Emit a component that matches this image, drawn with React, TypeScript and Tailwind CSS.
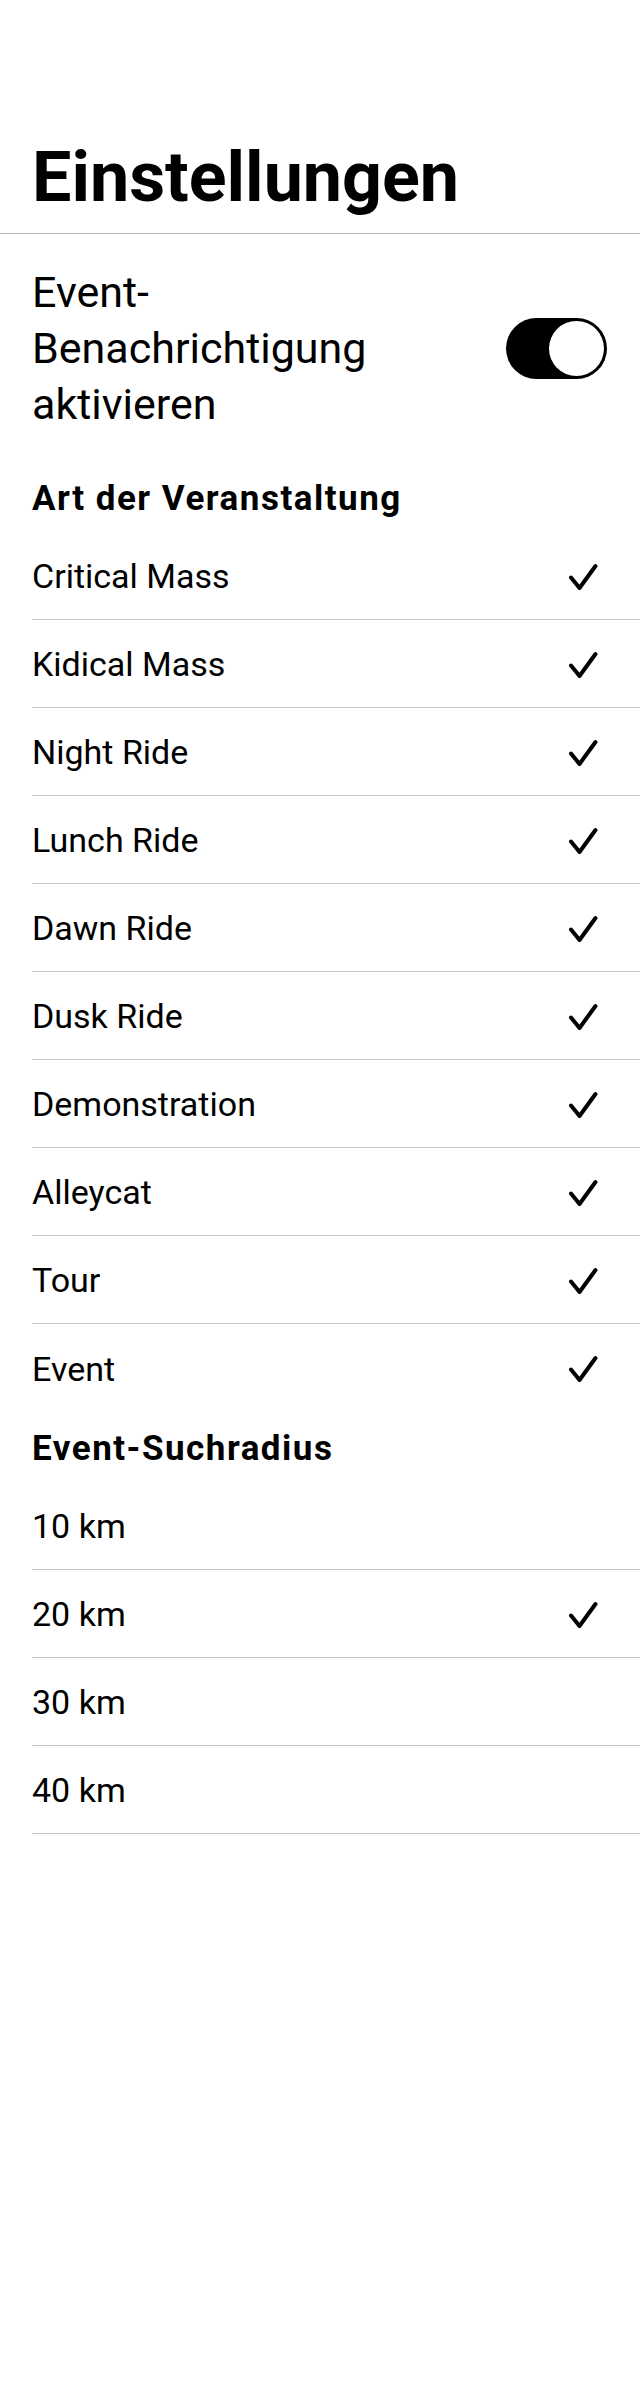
import React from "react";

const eventTypes = [
  "Critical Mass",
  "Kidical Mass",
  "Night Ride",
  "Lunch Ride",
  "Dawn Ride",
  "Dusk Ride",
  "Demonstration",
  "Alleycat",
  "Tour",
  "Event",
];

const radii = [
  { label: "10 km", checked: false },
  { label: "20 km", checked: true },
  { label: "30 km", checked: false },
  { label: "40 km", checked: false },
];

function Check() {
  return (
    <svg width="30" height="28" viewBox="0 0 30 28" fill="none">
      <path
        d="M3 14.5 L11.5 25 L27.5 3"
        stroke="#000"
        strokeWidth="4"
        strokeLinecap="round"
        strokeLinejoin="round"
      />
    </svg>
  );
}

function Row({ label, checked, divider }: { label: string; checked: boolean; divider: boolean }) {
  return (
    <div
      className={`ml-8 h-[88px] flex items-center justify-between pt-[2px] pr-[42px] ${
        divider ? "border-b border-[#c6c6c8]" : ""
      }`}
    >
      <span className="text-[34px] text-black">{label}</span>
      {checked && <Check />}
    </div>
  );
}

function SectionHeader({ children }: { children: React.ReactNode }) {
  return (
    <h2 className="px-8 pt-[18px] pb-[14px] text-[35px] leading-[38px] font-bold tracking-[1.5px] text-black">
      {children}
    </h2>
  );
}

export default function App() {
  return (
    <div
      className="w-[640px] min-h-[2400px] bg-white text-black"
      style={{ fontFamily: 'Roboto, "Liberation Sans", sans-serif' }}
    >
      {/* Large title */}
      <h1 className="px-8 pt-[136px] pb-[14px] text-[70px] leading-[83px] font-bold border-b border-[#b4b4b4]">
        Einstellungen
      </h1>

      {/* Notification toggle */}
      <div className="flex items-center justify-between pl-8 pr-[33px] pt-[30px] pb-[30px]">
        <p className="max-w-[400px] text-[43px] leading-[56px]">
          Event-Benachrichtigung aktivieren
        </p>
        <div className="w-[101px] h-[61px] rounded-full bg-black flex items-center justify-end p-[3px]">
          <div className="w-[55px] h-[55px] rounded-full bg-white" />
        </div>
      </div>

      <SectionHeader>Art der Veranstaltung</SectionHeader>
      {eventTypes.map((t, i) => (
        <Row key={t} label={t} checked={true} divider={i < eventTypes.length - 1} />
      ))}

      <SectionHeader>Event-Suchradius</SectionHeader>
      {radii.map((r) => (
        <Row key={r.label} label={r.label} checked={r.checked} divider={true} />
      ))}
    </div>
  );
}
